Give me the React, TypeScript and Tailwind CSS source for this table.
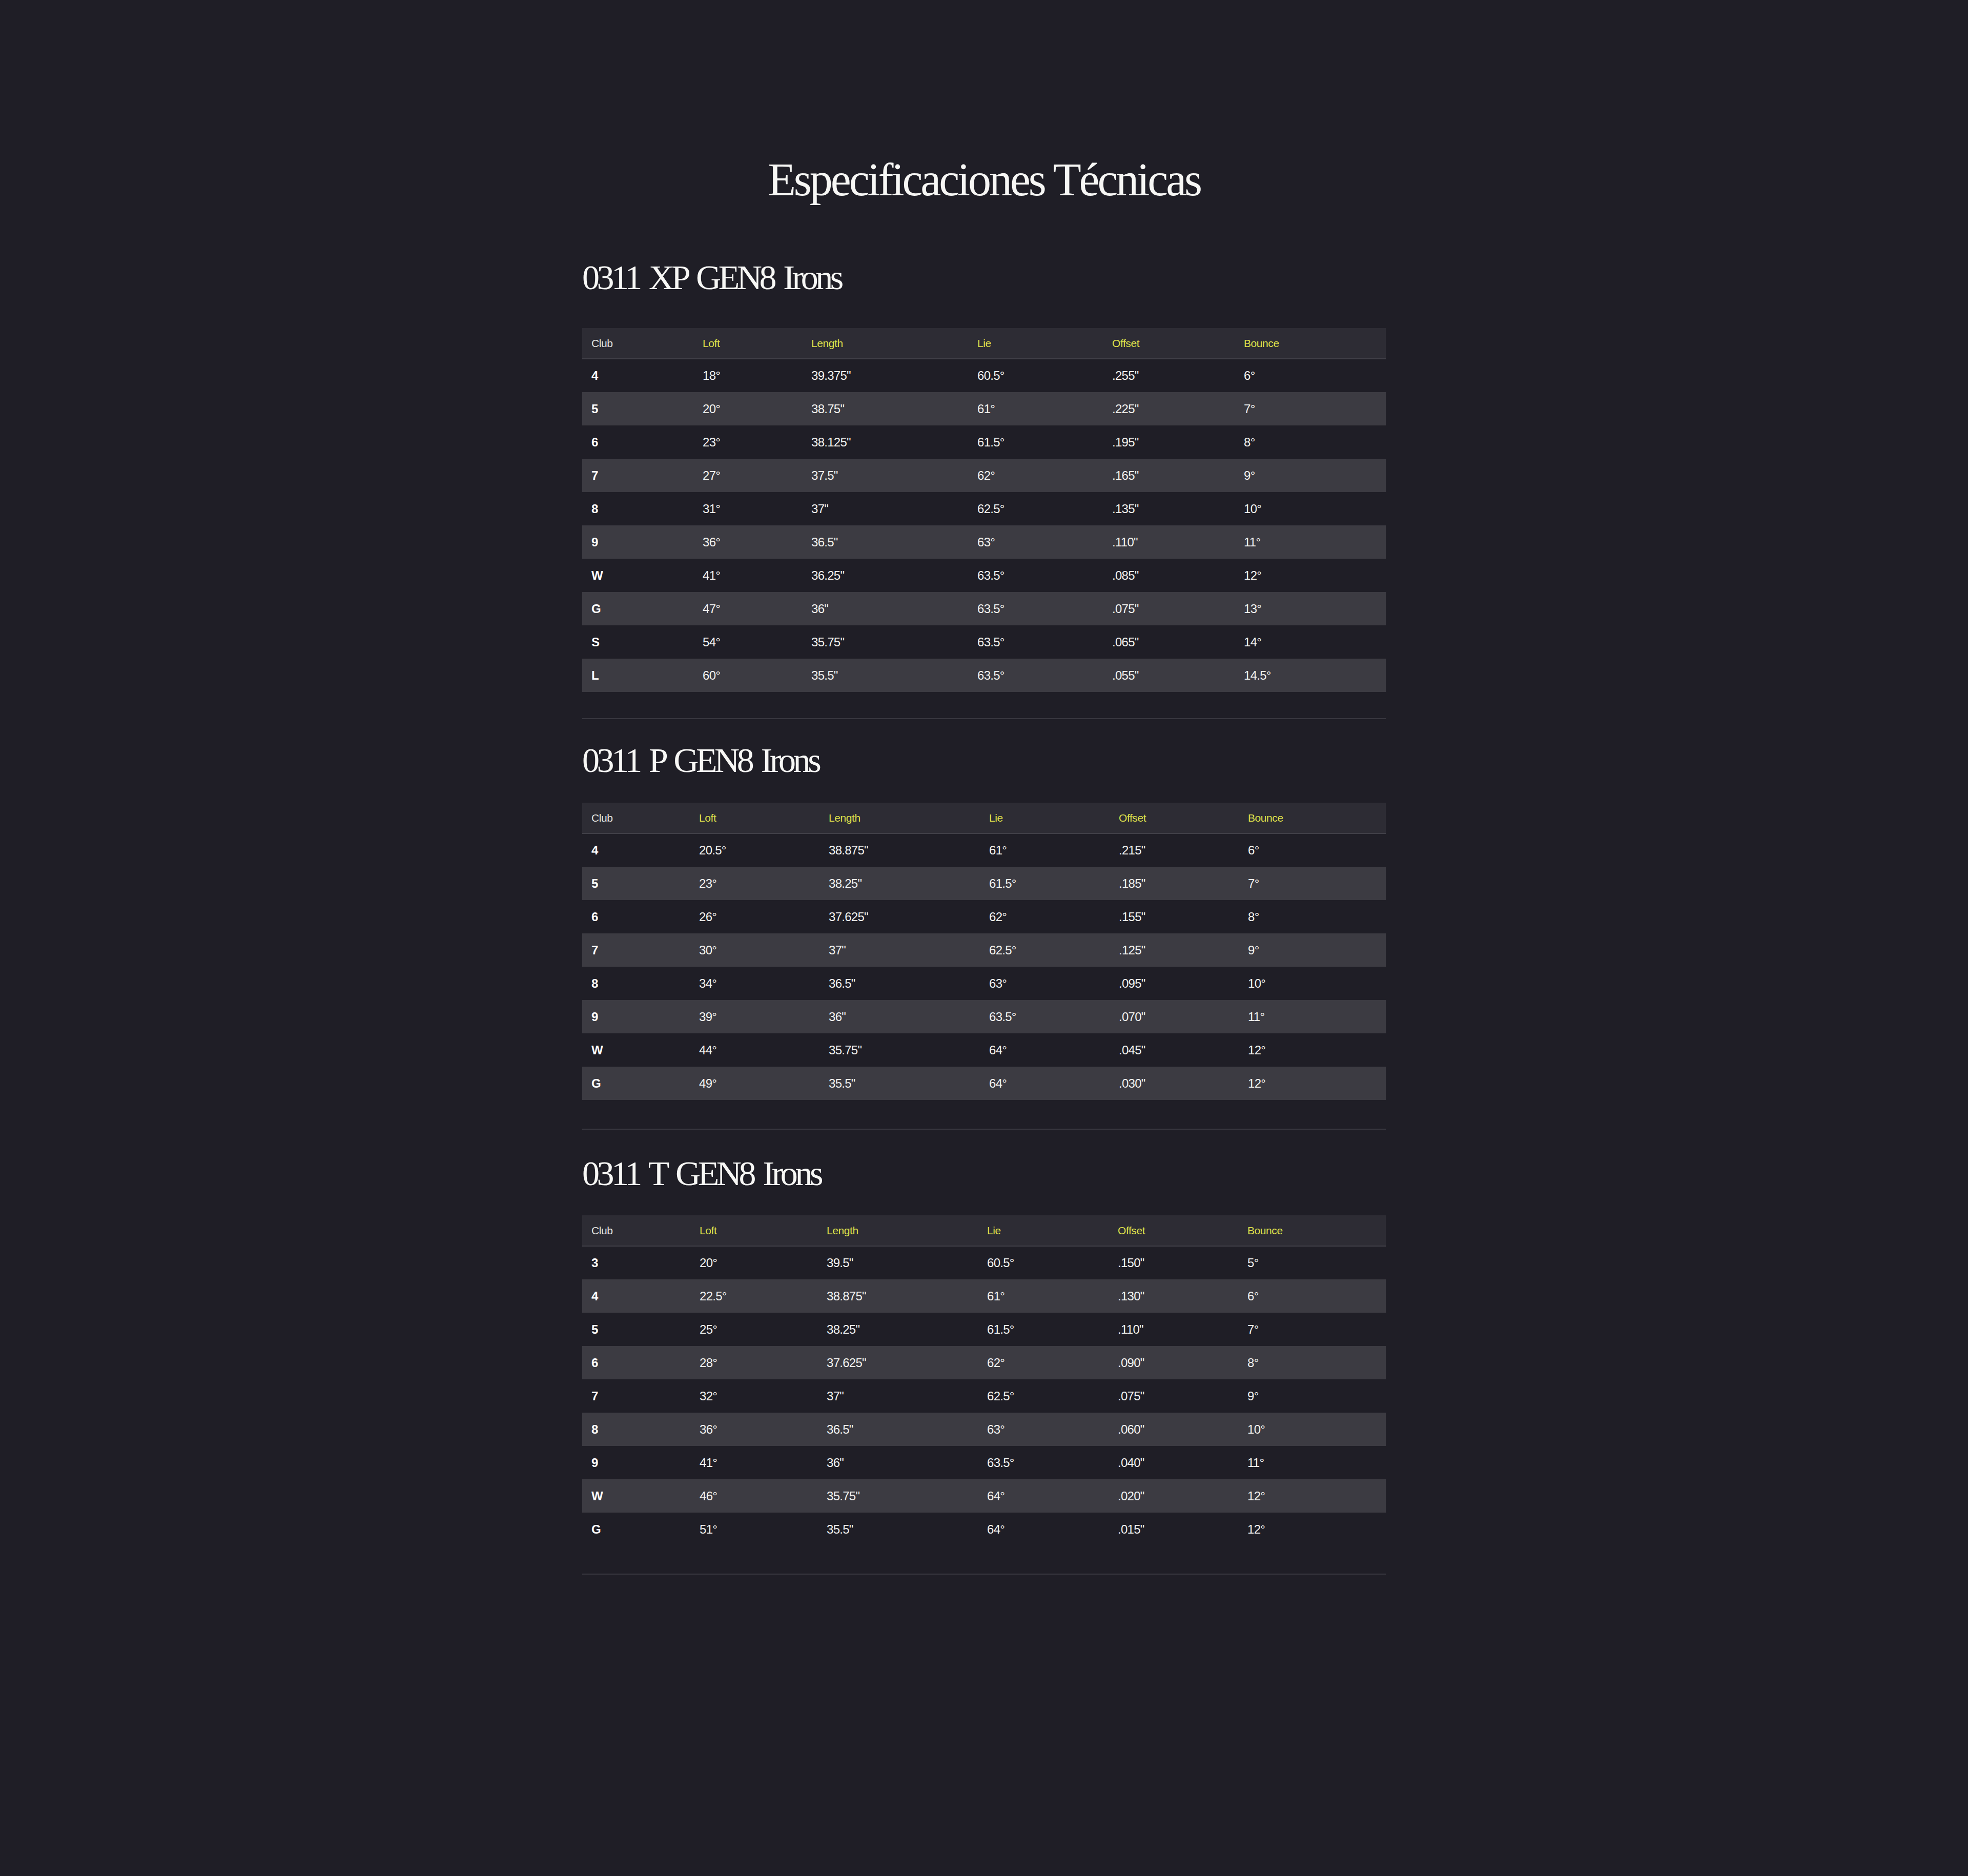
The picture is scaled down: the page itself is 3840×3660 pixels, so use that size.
import React from 'react'

type Row = [string, string, string, string, string, string]

interface Spec {
  nombre: string
  cols: string[] // column widths, last one takes the rest
  headGap: string
  tableGap: string
  sepGap: string
  filas: Row[]
}

const specs: Spec[] = [
  {
    nombre: '0311 XP GEN8 Irons',
    cols: ['w-[217px]', 'w-[212px]', 'w-[324px]', 'w-[263px]', 'w-[257px]', ''],
    headGap: 'mt-[111px]',
    tableGap: 'mt-[65px]',
    sepGap: 'mt-[51px]',
    filas: [
      ['4', '18°', '39.375"', '60.5°', '.255"', '6°'],
      ['5', '20°', '38.75"', '61°', '.225"', '7°'],
      ['6', '23°', '38.125"', '61.5°', '.195"', '8°'],
      ['7', '27°', '37.5"', '62°', '.165"', '9°'],
      ['8', '31°', '37"', '62.5°', '.135"', '10°'],
      ['9', '36°', '36.5"', '63°', '.110"', '11°'],
      ['W', '41°', '36.25"', '63.5°', '.085"', '12°'],
      ['G', '47°', '36"', '63.5°', '.075"', '13°'],
      ['S', '54°', '35.75"', '63.5°', '.065"', '14°'],
      ['L', '60°', '35.5"', '63.5°', '.055"', '14.5°'],
    ],
  },
  {
    nombre: '0311 P GEN8 Irons',
    cols: ['w-[210px]', 'w-[253px]', 'w-[313px]', 'w-[253px]', 'w-[252px]', ''],
    headGap: 'mt-[46px]',
    tableGap: 'mt-[49px]',
    sepGap: 'mt-[56px]',
    filas: [
      ['4', '20.5°', '38.875"', '61°', '.215"', '6°'],
      ['5', '23°', '38.25"', '61.5°', '.185"', '7°'],
      ['6', '26°', '37.625"', '62°', '.155"', '8°'],
      ['7', '30°', '37"', '62.5°', '.125"', '9°'],
      ['8', '34°', '36.5"', '63°', '.095"', '10°'],
      ['9', '39°', '36"', '63.5°', '.070"', '11°'],
      ['W', '44°', '35.75"', '64°', '.045"', '12°'],
      ['G', '49°', '35.5"', '64°', '.030"', '12°'],
    ],
  },
  {
    nombre: '0311 T GEN8 Irons',
    cols: ['w-[211px]', 'w-[248px]', 'w-[313px]', 'w-[255px]', 'w-[253px]', ''],
    headGap: 'mt-[51px]',
    tableGap: 'mt-[48px]',
    sepGap: 'mt-[54px]',
    filas: [
      ['3', '20°', '39.5"', '60.5°', '.150"', '5°'],
      ['4', '22.5°', '38.875"', '61°', '.130"', '6°'],
      ['5', '25°', '38.25"', '61.5°', '.110"', '7°'],
      ['6', '28°', '37.625"', '62°', '.090"', '8°'],
      ['7', '32°', '37"', '62.5°', '.075"', '9°'],
      ['8', '36°', '36.5"', '63°', '.060"', '10°'],
      ['9', '41°', '36"', '63.5°', '.040"', '11°'],
      ['W', '46°', '35.75"', '64°', '.020"', '12°'],
      ['G', '51°', '35.5"', '64°', '.015"', '12°'],
    ],
  },
]

const cabecera = ['Club', 'Loft', 'Length', 'Lie', 'Offset', 'Bounce']

function TablaSpec({ spec }: { spec: Spec }) {
  return (
    <section>
      <h2 className={`${spec.headGap} font-['Liberation_Serif',serif] text-[68px] leading-none tracking-[-0.08em] [word-spacing:0.1em] text-[#f7f7f5]`}>
        {spec.nombre}
      </h2>

      <table className={`${spec.tableGap} w-full table-fixed border-collapse font-['Liberation_Sans',Arial,sans-serif]`}>
        <colgroup>
          {spec.cols.map((c, i) => (
            <col key={i} className={c} />
          ))}
        </colgroup>
        <thead>
          <tr className="h-[60px] bg-[#2d2c34] border-b-2 border-[#414048]">
            {cabecera.map((h, i) => (
              <th
                key={h}
                className={`pl-[18px] text-left text-[21px] font-normal tracking-[-0.02em] ${i === 0 ? 'text-[#e4e4e0]' : 'text-[#dfe14c]'}`}
              >
                {h}
              </th>
            ))}
          </tr>
        </thead>
        <tbody>
          {spec.filas.map((fila, r) => (
            <tr key={r} className={`h-[65px] ${r % 2 === 1 ? 'bg-[#3c3b42]' : 'bg-[#1f1e26]'}`}>
              {fila.map((v, i) => (
                <td
                  key={i}
                  className={`pl-[18px] text-[24px] tracking-[-0.03em] ${i === 0 ? 'font-bold text-white' : 'font-normal text-[#f2f2f0]'}`}
                >
                  {v}
                </td>
              ))}
            </tr>
          ))}
        </tbody>
      </table>

      <div className={`${spec.sepGap} h-[2px] bg-[#38373f]`} />
    </section>
  )
}

export default function App() {
  return (
    <div className="min-h-screen bg-[#1f1e26] pt-[306px] pb-[584px]">
      <h1 className="text-center font-['Liberation_Serif',serif] text-[90px] leading-none tracking-[-0.045em] text-[#f7f7f5]">
        Especificaciones Técnicas
      </h1>

      <div className="mx-auto w-[1568px]">
        {specs.map(s => (
          <TablaSpec key={s.nombre} spec={s} />
        ))}
      </div>
    </div>
  )
}
